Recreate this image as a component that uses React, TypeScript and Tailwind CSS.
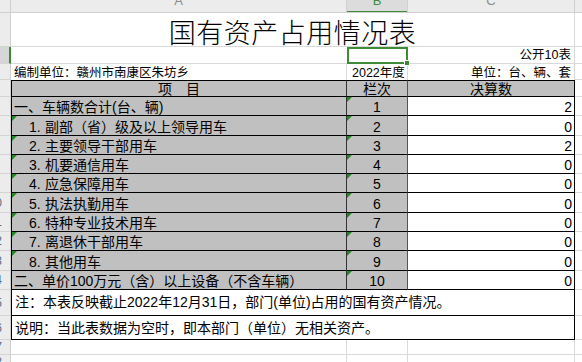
import React from "react";

type Item = { a: string; p?: string; b: string; c: string; indent: boolean; triA: boolean; row: number; h: string };

const items: Item[] = [
  { a: "一、车辆数合计(台、辆)", b: "1", c: "2", indent: false, triA: false, row: 5, h: "h-[19px]" },
  { p: "1.", a: "副部（省）级及以上领导用车", b: "2", c: "0", indent: true, triA: true, row: 6, h: "h-[20px]" },
  { p: "2.", a: "主要领导干部用车", b: "3", c: "2", indent: true, triA: true, row: 7, h: "h-[19px]" },
  { p: "3.", a: "机要通信用车", b: "4", c: "0", indent: true, triA: true, row: 8, h: "h-[19px]" },
  { p: "4.", a: "应急保障用车", b: "5", c: "0", indent: true, triA: true, row: 9, h: "h-[19px]" },
  { p: "5.", a: "执法执勤用车", b: "6", c: "0", indent: true, triA: true, row: 10, h: "h-[20px]" },
  { p: "6.", a: "特种专业技术用车", b: "7", c: "0", indent: true, triA: true, row: 11, h: "h-[19px]" },
  { p: "7.", a: "离退休干部用车", b: "8", c: "0", indent: true, triA: true, row: 12, h: "h-[19px]" },
  { p: "8.", a: "其他用车", b: "9", c: "0", indent: true, triA: true, row: 13, h: "h-[20px]" },
  { a: "二、单价100万元（含）以上设备（不含车辆）", b: "10", c: "0", indent: false, triA: false, row: 14, h: "h-[19px]" },
];

function RowHead({ n, h, sel }: { n: number; h: string; sel?: boolean }) {
  return (
    <div
      className={`${h} w-[11px] shrink-0 overflow-hidden flex items-center justify-end pr-[8px] border-b border-[#d4d4d4] ${
        sel ? "bg-[#d6d6d6] border-r-2 border-r-[#3d8b37]" : "bg-[#ececec] border-r border-r-[#d0d0d0]"
      }`}
    >
      {n >= 10 && (
        <span className="shrink-0 whitespace-nowrap text-[12px] leading-none text-[#5d6b84]">{n}</span>
      )}
    </div>
  );
}

function Tri() {
  return (
    <div className="absolute left-0 top-0 w-0 h-0 border-t-[5px] border-r-[5px] border-t-[#1f8a1f] border-r-transparent" />
  );
}

function Trail({ h }: { h: string }) {
  return <div className={`${h} flex-1 bg-white border-b border-[#dadada]`} />;
}

export default function App() {
  return (
    <div className="w-[582px] h-[362px] overflow-hidden bg-white text-black font-['Liberation_Sans','Noto_Sans_CJK_SC',sans-serif] flex flex-col">
      {/* column header */}
      <div className="flex h-[13px] shrink-0 bg-[#ececec] border-b border-[#d0d0d0] overflow-hidden">
        <div className="w-[11px] shrink-0 border-r border-[#d0d0d0]" />
        <div className="w-[336px] shrink-0 border-r border-[#d0d0d0] flex justify-center overflow-hidden">
          <span className="-mt-[6px] text-[13px] leading-[13px] text-[#8c8c8c]">A</span>
        </div>
        <div className="w-[61px] shrink-0 border-r border-[#d0d0d0] bg-[#dcdcdc] flex justify-center overflow-hidden relative">
          <span className="-mt-[6px] text-[13px] leading-[13px] text-[#3d8b37]">B</span>
          <div className="absolute left-0 right-0 bottom-[-1px] h-[2px] bg-[#3d8b37]" />
        </div>
        <div className="w-[167px] shrink-0 border-r border-[#d0d0d0] flex justify-center overflow-hidden">
          <span className="-mt-[6px] text-[13px] leading-[13px] text-[#8c8c8c]">C</span>
        </div>
        <div className="flex-1" />
      </div>

      {/* row 1 title */}
      <div className="flex h-[34px] shrink-0">
        <RowHead n={1} h="h-[34px]" />
        <div className="w-[564px] shrink-0 border-r border-b border-[#dadada] flex items-center justify-center pt-[3px]">
          <span className="text-[27px] leading-none font-light tracking-[0.5px] font-['Noto_Sans_CJK_SC',sans-serif]">
            国有资产占用情况表
          </span>
        </div>
        <Trail h="h-[34px]" />
      </div>

      {/* row 2 */}
      <div className="flex h-[17px] shrink-0">
        <RowHead n={2} h="h-[17px]" sel />
        <div className="w-[336px] shrink-0 border-b border-[#dadada]" />
        <div className="w-[61px] shrink-0 h-[17px] border-2 border-[#3d8b37] relative">
          <div className="absolute -right-[4px] -bottom-[4px] w-[6px] h-[6px] bg-[#3d8b37] border border-white" />
        </div>
        <div className="w-[167px] shrink-0 border-r border-b border-[#dadada] flex items-center justify-end pr-[3px] text-[12.5px] leading-none pt-[1px]">
          公开10表
        </div>
        <Trail h="h-[17px]" />
      </div>

      {/* row 3 */}
      <div className="flex h-[16px] shrink-0">
        <RowHead n={3} h="h-[16px]" />
        <div className="w-[336px] shrink-0 border-r border-[#dadada] flex items-end pb-[1px] pl-[3px] text-[12.5px] leading-none whitespace-nowrap">
          编制单位：赣州市南康区朱坊乡
        </div>
        <div className="w-[61px] shrink-0 border-r border-[#dadada] flex items-end pb-[1px] pl-[5px] text-[12.5px] leading-none whitespace-nowrap">
          2022年度
        </div>
        <div className="w-[167px] shrink-0 border-r border-[#dadada] flex items-end justify-end pb-[1px] pr-[3px] text-[12.5px] leading-none whitespace-nowrap">
          单位：台、辆、套
        </div>
        <Trail h="h-[16px]" />
      </div>

      {/* row 4 header */}
      <div className="flex h-[17px] shrink-0">
        <RowHead n={4} h="h-[17px]" />
        <div className="w-[336px] shrink-0 bg-[#c0c0c0] border border-r-[#333] border-black flex items-center justify-center text-[14px] leading-none">
          项　目
        </div>
        <div className="w-[61px] shrink-0 bg-[#c0c0c0] border-t border-b border-r border-black border-r-[#555] flex items-center justify-center text-[14px] leading-none">
          栏次
        </div>
        <div className="w-[167px] shrink-0 bg-[#c0c0c0] border-t border-b border-r border-black flex items-center justify-center text-[14px] leading-none">
          决算数
        </div>
        <Trail h="h-[17px]" />
      </div>

      {items.map((it) => (
        <div key={it.row} className={`flex ${it.h} shrink-0`}>
          <RowHead n={it.row} h={it.h} />
          <div
            className={`relative w-[336px] shrink-0 bg-[#c0c0c0] border-l border-b border-r border-black border-r-[#333] flex items-center pt-[2px] text-[14px] leading-none whitespace-nowrap overflow-hidden ${
              it.indent ? "pl-[17px]" : "pl-[2px]"
            }`}
          >
            {it.triA && <Tri />}
            {it.p && <span className="w-[16px] shrink-0">{it.p}</span>}
            <span>{it.a}</span>
          </div>
          <div className="relative w-[61px] shrink-0 bg-[#c0c0c0] border-b border-r border-black border-r-[#555] flex items-center justify-center pt-[2px] text-[14px] leading-none">
            <Tri />
            {it.b}
          </div>
          <div className="w-[167px] shrink-0 bg-white border-b border-r border-black flex items-center justify-end pr-[2px] pt-[2px] text-[14px] leading-none">
            {it.c}
          </div>
          <Trail h={it.h} />
        </div>
      ))}

      {/* row 15 */}
      <div className="flex h-[26px] shrink-0">
        <RowHead n={15} h="h-[26px]" />
        <div className="w-[564px] shrink-0 border-l border-r border-b border-black flex items-center pl-[3px] pb-[2px] text-[14px] leading-none whitespace-nowrap">
          注：本表反映截止2022年12月31日，部门(单位)占用的国有资产情况。
        </div>
        <Trail h="h-[26px]" />
      </div>

      {/* row 16 */}
      <div className="flex h-[24px] shrink-0">
        <RowHead n={16} h="h-[24px]" />
        <div className="w-[564px] shrink-0 border-l border-r border-b border-black flex items-center pl-[3px] text-[14px] leading-none whitespace-nowrap">
          说明：当此表数据为空时，即本部门（单位）无相关资产。
        </div>
        <Trail h="h-[24px]" />
      </div>

      {/* row 17 */}
      <div className="flex h-[15px] shrink-0">
        <RowHead n={17} h="h-[15px]" />
        <div className="w-[336px] shrink-0 border-r border-b border-[#dadada]" />
        <div className="w-[61px] shrink-0 border-r border-b border-[#dadada]" />
        <div className="w-[167px] shrink-0 border-r border-b border-[#dadada]" />
        <Trail h="h-[15px]" />
      </div>

      {/* row 18 */}
      <div className="flex h-[15px] shrink-0">
        <RowHead n={18} h="h-[15px]" />
        <div className="w-[336px] shrink-0 border-r border-b border-[#dadada]" />
        <div className="w-[61px] shrink-0 border-r border-b border-[#dadada]" />
        <div className="w-[167px] shrink-0 border-r border-b border-[#dadada]" />
        <Trail h="h-[15px]" />
      </div>
    </div>
  );
}
